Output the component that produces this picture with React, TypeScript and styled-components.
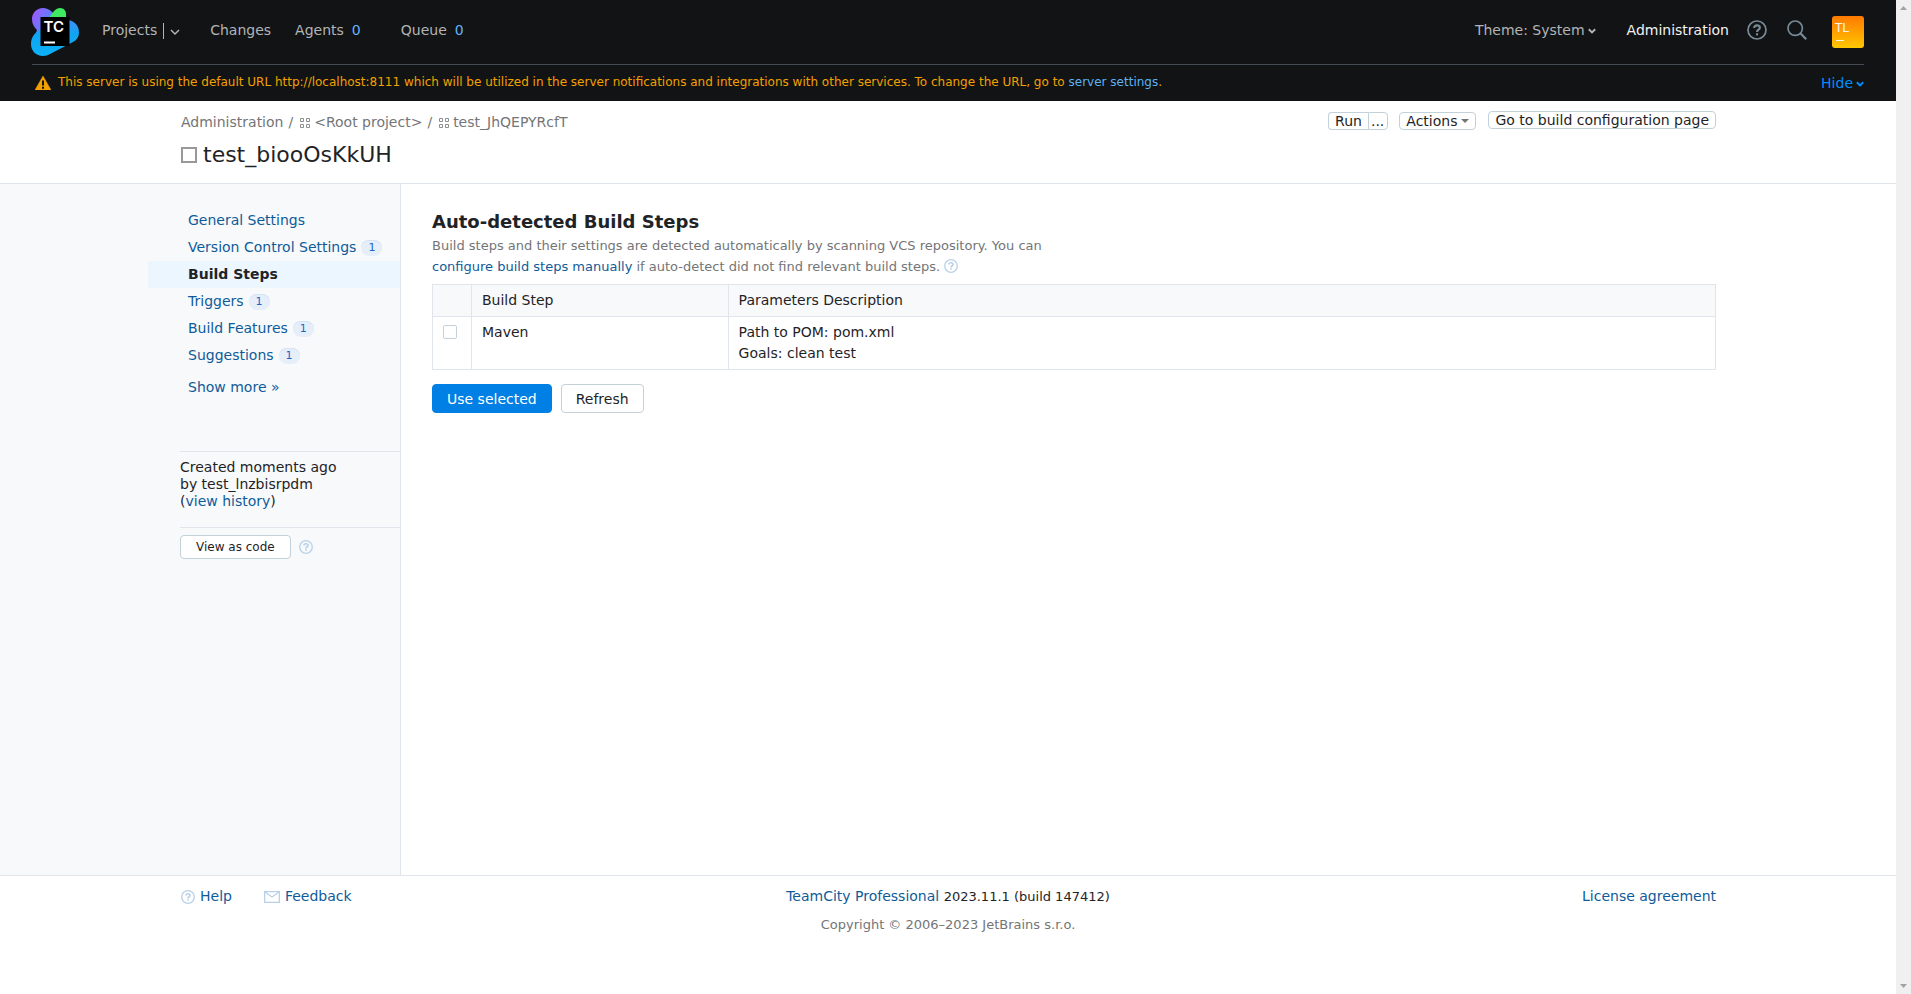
import React from "react";
import styled, { createGlobalStyle, css } from "styled-components";

const Global = createGlobalStyle`
  * { box-sizing: border-box; }
  body {
    margin: 0;
    background: #fff;
    color: #1f2326;
    font: 14px/21px "DejaVu Sans", sans-serif;
  }
  button { font: inherit; color: inherit; cursor: pointer; }
  a { color: #0f5b99; text-decoration: none; }
  svg { display: block; flex: none; }
`;

const Frame = styled.div`
  display: flex;
  min-height: 100vh;
`;

const Page = styled.div`
  flex: 1;
  min-width: 0;
  display: flex;
  flex-direction: column;
`;

const ScrollRail = styled.div`
  width: 15px;
  padding: 6px 4px;
  background: #f0f0f0;
  display: flex;
  flex-direction: column;
  justify-content: space-between;
`;

/* ---------- header ---------- */

const Header = styled.header`
  background: #121314;
  padding: 0 32px;
`;

const TopBar = styled.div`
  display: flex;
  align-items: center;
  justify-content: space-between;
  height: 65px;
  padding-bottom: 1px;
  border-bottom: 1px solid #434a54;
`;

const BarGroup = styled.div`
  display: flex;
  align-items: center;
`;

const LogoLink = styled.a`
  margin: 0 22px 0 -1px;
`;

const Nav = styled.nav`
  display: flex;
  align-items: center;
  padding-bottom: 2px;
`;

const NavLink = styled.a<{ $bright?: boolean }>`
  color: ${(p) => (p.$bright ? "#f2f2f2" : "#b2b4b6")};
`;

const NavItem = styled.div<{ $gap: number }>`
  display: flex;
  align-items: center;
  margin-right: ${(p) => p.$gap}px;
`;

const NavCount = styled.span`
  margin-left: 8px;
  color: #65b1ff;
`;

const NavDivider = styled.span`
  width: 1px;
  height: 16px;
  margin: 0 6px;
  background: #b2b4b6;
`;

const PlainButton = styled.button<{ $color?: string }>`
  display: flex;
  align-items: center;
  gap: 3px;
  padding: 0;
  border: 0;
  background: none;
  color: ${(p) => p.$color || "#b2b4b6"};
`;

const Tools = styled.div`
  display: flex;
  align-items: center;
  padding-bottom: 3px;
`;

const ToolGap = styled.div<{ $left: number }>`
  margin-left: ${(p) => p.$left}px;
`;

const Avatar = styled.button`
  display: flex;
  flex-direction: column;
  align-items: flex-start;
  width: 32px;
  height: 32px;
  margin-left: 25px;
  padding: 4px 3px;
  border: 0;
  border-radius: 3px;
  background: linear-gradient(#ff7a00, #ffc800);
  color: #fff8ec;
  font: 12px/16px "DejaVu Sans", sans-serif;

  &::after {
    content: "";
    width: 8px;
    height: 1px;
    margin: 4px 0 0 1px;
    background: #fff8ec;
  }
`;

const Banner = styled.div`
  display: flex;
  align-items: center;
  justify-content: space-between;
  height: 36px;
  padding-left: 3px;
`;

const Warning = styled.p`
  display: flex;
  align-items: center;
  gap: 7px;
  margin: 0;
  padding-bottom: 1px;
  color: #f2a100;
  font-size: 12px;
`;

const BannerLink = styled.a`
  color: #5eb2f2;
`;

/* ---------- title area ---------- */

const Container = styled.div`
  max-width: 1600px;
  margin: 0 auto;
  padding: 0 32px;
`;

const TitleArea = styled.section`
  border-bottom: 1px solid #dfe5eb;
`;

const TitleRow = styled(Container)`
  display: flex;
  align-items: flex-start;
  justify-content: space-between;
  min-height: 82px;
  padding-top: 10px;
`;

const Crumbs = styled.nav`
  display: flex;
  align-items: center;
  gap: 5px;
  padding: 1px 0 0 1px;
  color: #737577;
`;

const Crumb = styled.a`
  display: flex;
  align-items: center;
  gap: 4px;
  color: #737577;

  & + & { margin-left: 2px; }
`;

const Title = styled.h1`
  display: flex;
  align-items: center;
  gap: 6px;
  margin: 8px 0 0;
  padding-left: 1px;
  font-size: 22px;
  line-height: 28px;
  font-weight: 400;
`;

const ConfigMark = styled.span`
  width: 16px;
  height: 16px;
  border: 2px solid #999;
`;

const ActionBar = styled.div`
  display: flex;
  align-items: flex-start;
  gap: 12px;
`;

const SmallButton = styled.button`
  display: flex;
  align-items: center;
  gap: 4px;
  height: 18px;
  padding: 0 6px;
  border: 1px solid #c3d1db;
  border-radius: 4px;
  background: #fff;
  line-height: 16px;
`;

const Lowered = styled.div`
  display: flex;
  gap: 11px;
  padding-top: 1px;
`;

const SplitButton = styled.div`
  display: flex;

  ${SmallButton}:first-child {
    border-radius: 4px 0 0 4px;
    border-right: 0;
  }
  ${SmallButton}:last-child {
    border-radius: 0 4px 4px 0;
    padding: 0 3px 0 2px;
  }
`;

/* ---------- body ---------- */

const Body = styled.div`
  flex: 1;
  display: flex;
`;

const Sidebar = styled.aside`
  flex: none;
  width: calc(max(0px, (100% - 1600px) / 2) + 253px);
  padding: 23px 0 24px;
  border-right: 1px solid #dfe5eb;
  background: #f7f9fb;
  display: flex;
  flex-direction: column;
  align-items: flex-end;
`;

const Menu = styled.ul`
  width: 252px;
  margin: 0;
  padding: 0;
  list-style: none;
`;

const MenuItem = styled.li<{ $active?: boolean }>`
  height: 27px;
  padding-left: 40px;
  display: flex;
  align-items: center;
  gap: 5px;
  ${(p) =>
    p.$active &&
    css`
      background: #ebf6ff;
      a { color: #1f2326; font-weight: 700; }
    `}
`;

const Badge = styled.span`
  height: 16px;
  padding: 0 7px;
  border-radius: 8px;
  background: #e6eff9;
  box-shadow: inset 0 1px 0 #d3e3f5;
  color: #1a66c9;
  font-size: 11px;
  line-height: 16px;
`;

const ShowMore = styled.div`
  width: 252px;
  padding: 8px 0 0 40px;
`;

const SideBlock = styled.div`
  width: 220px;
  border-top: 1px solid #dfe5eb;
  padding: 7px 0 17px;
  line-height: 17px;
`;

const SideActions = styled.div`
  width: 220px;
  border-top: 1px solid #dfe5eb;
  padding-top: 7px;
  display: flex;
  align-items: center;
  gap: 8px;
`;

const HistoryGap = styled.div`
  height: 53px;
`;

const Button = styled.button<{ $primary?: boolean; $small?: boolean }>`
  height: ${(p) => (p.$small ? 24 : 29)}px;
  padding: 0 ${(p) => (p.$small ? 15 : 14)}px;
  border: 1px solid ${(p) => (p.$primary ? "#0080e5" : "#c3d1db")};
  border-radius: 4px;
  background: ${(p) => (p.$primary ? "#0080e5" : "#fff")};
  color: ${(p) => (p.$primary ? "#fff" : "#1f2326")};
  font-size: ${(p) => (p.$small ? 12 : 14)}px;
  line-height: 20px;
`;

const Main = styled.main`
  flex: 1;
  min-width: 0;
  max-width: 1348px;
  padding: 25px 33px 32px 31px;
`;

const Heading = styled.h2`
  margin: 0;
  font-size: 18px;
  line-height: 26px;
`;

const Intro = styled.div`
  margin: 0 0 7px;
  color: #737577;
  font-size: 13px;
  line-height: 21px;

  p { margin: 0; }
`;

const HintButton = styled.button`
  display: inline-flex;
  padding: 0;
  border: 0;
  background: none;
  vertical-align: -2px;
`;

const StepsTable = styled.table`
  width: 100%;
  border-collapse: collapse;
  table-layout: fixed;

  th, td {
    padding: 5px 10px;
    border: 1px solid #dfe5eb;
    font-weight: 400;
    text-align: left;
    vertical-align: top;
  }
  th { background: #f7f9fb; }
`;

const Check = styled.input`
  display: block;
  appearance: none;
  width: 14px;
  height: 14px;
  margin: 3px 0 0;
  border: 1px solid #c3d1db;
  border-radius: 2px;
  background: #fff;
  &:checked { background: #0080e5; }
`;

const ButtonRow = styled.div`
  display: flex;
  gap: 9px;
  margin-top: 14px;
`;

/* ---------- footer ---------- */

const Footer = styled.footer`
  border-top: 1px solid #dfe5eb;
  min-height: 119px;
  padding: 10px 0 32px;
`;

const FooterRow = styled(Container)`
  display: grid;
  grid-template-columns: 1fr auto 1fr;
`;

const FooterLinks = styled.div`
  display: flex;
  gap: 32px;
  padding-left: 1px;
`;

const IconLink = styled.a`
  display: flex;
  align-items: center;
  gap: 5px;
`;

const Version = styled.div`
  text-align: center;
  span { font-size: 13px; }
`;

const License = styled.div`
  text-align: right;
`;

const Copyright = styled.div`
  margin-top: 7px;
  text-align: center;
  color: #737577;
  font-size: 13px;
`;

/* ---------- drawings ---------- */

const Logo = () => (
  <svg width="49" height="48" viewBox="0 0 49 48" aria-label="TeamCity">
    <defs>
      <linearGradient id="tcPurple" x1="0" y1="0.3" x2="1" y2="0.7">
        <stop offset="0" stopColor="#9a5cff" />
        <stop offset="0.55" stopColor="#4d86fb" />
        <stop offset="1" stopColor="#10a8f5" />
      </linearGradient>
      <linearGradient id="tcBlue" x1="0" y1="0" x2="0" y2="1">
        <stop offset="0" stopColor="#3f8ff8" />
        <stop offset="0.4" stopColor="#0fa5f2" />
        <stop offset="1" stopColor="#0bb2f8" />
      </linearGradient>
    </defs>
    <path d="M12 0C5.500 0 1 5 1 11c0 5 2 8 5 11l-1 3 10 2 23-9L21 4C18 1 15 0 12 0z" fill="url(#tcPurple)" />
    <path d="M8 22C4 25 0 29 0 36c0 7 5 12 12 12 3 0 5-1 7-2l23-12c4-2 6-5.500 6-9.500C48 18 44 13 37 12L14 20z" fill="url(#tcBlue)" />
    <path d="M17 11l6-8c2-2 4-3 6-3 4 0 6 3 6 6v12H17z" fill="#3dea62" />
    <rect x="9.500" y="9" width="29" height="29" fill="#000" />
    <text x="12.500" y="24" fill="#fff" fontFamily="Inter, sans-serif" fontSize="15" fontWeight="600">TC</text>
    <rect x="13" y="33.500" width="11" height="2" fill="#fff" />
  </svg>
);

const Chevron = ({ size = 10, weight = 1.5 }: { size?: number; weight?: number }) => (
  <svg width={size} height={size} viewBox="0 0 10 10" fill="none" stroke="currentColor" strokeWidth={weight}>
    <path d="M1 4l4 4 4-4" />
  </svg>
);

const Question = ({ size = 14, color = "#b9d1e8", weight = 1.3 }: { size?: number; color?: string; weight?: number }) => (
  <svg width={size} height={size} viewBox="0 0 14 14" fill="none" stroke={color} strokeWidth={weight}>
    <circle cx="7" cy="7" r="6.3" />
    <path d="M5 5.6C5 4.4 5.8 3.8 7 3.8s2 .7 2 1.7C9 6.8 7 6.8 7 8.4" strokeWidth={weight * 1.25} />
    <path d="M7 9.3v1.5" strokeWidth={weight * 1.25} />
  </svg>
);

const Search = () => (
  <svg width="20" height="20" viewBox="0 0 20 20" fill="none" stroke="#788b98" strokeWidth="1.7">
    <circle cx="8.2" cy="8.2" r="7.2" />
    <path d="M13.2 13l6 6.2" strokeWidth="2.2" />
  </svg>
);

const WarningIcon = () => (
  <svg width="16" height="14" viewBox="0 0 16 14">
    <path d="M8 0l8 14H0z" fill="#f2a100" stroke="#f2a100" strokeWidth="0.5" strokeLinejoin="round" />
    <path d="M7 4.5h2v5H7zM7 10.7h2v2H7z" fill="#121314" />
  </svg>
);

const ProjectIcon = () => (
  <svg width="10" height="10" viewBox="0 0 10 10" fill="none" stroke="#8c8e90">
    <path d="M.5.5h3v3h-3zM6.5.5h3v3h-3zM.5 6.5h3v3h-3zM6.5 6.5h3v3h-3z" />
  </svg>
);

const Mail = () => (
  <svg width="16" height="12" viewBox="0 0 16 12" fill="none" stroke="#b9d1e8">
    <path d="M.5.5h15v11H.5z" strokeWidth="1.6" />
    <path d="M1 1l7 5 7-5" strokeWidth="1.3" />
  </svg>
);

const Triangle = ({ up, width, color }: { up?: boolean; width: number; color: string }) => (
  <svg width={width} height="4" viewBox="0 0 8 4" preserveAspectRatio="none">
    <path d={up ? "M4 0l4 4H0z" : "M0 0h8L4 4z"} fill={color} />
  </svg>
);

const menu = [
  { label: "General Settings" },
  { label: "Version Control Settings", count: 1 },
  { label: "Build Steps", active: true },
  { label: "Triggers", count: 1 },
  { label: "Build Features", count: 1 },
  { label: "Suggestions", count: 1 },
];

export default function App() {
  return (
    <Frame>
      <Global />
      <Page>
        <Header>
          <TopBar>
            <BarGroup>
              <LogoLink href="#"><Logo /></LogoLink>
              <Nav>
                <NavItem $gap={30}>
                  <NavLink href="#">Projects</NavLink>
                  <NavDivider />
                  <PlainButton aria-label="Show projects"><Chevron /></PlainButton>
                </NavItem>
                <NavItem $gap={24}><NavLink href="#">Changes</NavLink></NavItem>
                <NavItem $gap={40}>
                  <NavLink href="#">Agents</NavLink><NavCount>0</NavCount>
                </NavItem>
                <NavItem $gap={0}>
                  <NavLink href="#">Queue</NavLink><NavCount>0</NavCount>
                </NavItem>
              </Nav>
            </BarGroup>
            <BarGroup>
              <Tools>
                <PlainButton>Theme: System <Chevron size={8} weight={2.4} /></PlainButton>
                <ToolGap $left={31}><NavLink href="#" $bright>Administration</NavLink></ToolGap>
                <ToolGap $left={18}>
                  <PlainButton aria-label="Help"><Question size={20} color="#788b98" weight={1.2} /></PlainButton>
                </ToolGap>
                <ToolGap $left={20}>
                  <PlainButton aria-label="Search"><Search /></PlainButton>
                </ToolGap>
              </Tools>
              <Avatar>TL</Avatar>
            </BarGroup>
          </TopBar>
          <Banner>
            <Warning>
              <WarningIcon />
              <span>
                This server is using the default URL http://localhost:8111 which will be utilized in the server
                notifications and integrations with other services. To change the URL, go to{" "}
                <BannerLink href="#">server settings</BannerLink>.
              </span>
            </Warning>
            <PlainButton $color="#008eff">Hide <Chevron size={8} weight={2.4} /></PlainButton>
          </Banner>
        </Header>

        <TitleArea>
          <TitleRow>
            <div>
              <Crumbs aria-label="Breadcrumbs">
                <Crumb href="#">Administration</Crumb>/
                <Crumb href="#"><ProjectIcon />&lt;Root project&gt;</Crumb>/
                <Crumb href="#"><ProjectIcon />test_JhQEPYRcfT</Crumb>
              </Crumbs>
              <Title><ConfigMark />test_biooOsKkUH</Title>
            </div>
            <ActionBar>
              <Lowered>
                <SplitButton>
                  <SmallButton>Run</SmallButton>
                  <SmallButton aria-label="Run custom build">...</SmallButton>
                </SplitButton>
                <SmallButton>Actions <Triangle width={8} color="#737577" /></SmallButton>
              </Lowered>
              <SmallButton>Go to build configuration page</SmallButton>
            </ActionBar>
          </TitleRow>
        </TitleArea>

        <Body>
          <Sidebar>
            <Menu>
              {menu.map((m) => (
                <MenuItem key={m.label} $active={m.active}>
                  <a href="#">{m.label}</a>
                  {m.count && <Badge>{m.count}</Badge>}
                </MenuItem>
              ))}
            </Menu>
            <ShowMore><a href="#">Show more »</a></ShowMore>
            <HistoryGap />
            <SideBlock>
              Created moments ago<br />
              by test_lnzbisrpdm<br />
              (<a href="#">view history</a>)
            </SideBlock>
            <SideActions>
              <Button $small>View as code</Button>
              <HintButton aria-label="About settings as code"><Question /></HintButton>
            </SideActions>
          </Sidebar>
          <Main>
            <Heading>Auto-detected Build Steps</Heading>
            <Intro>
              <p>Build steps and their settings are detected automatically by scanning VCS repository. You can</p>
              <p>
                <a href="#">configure build steps manually</a> if auto-detect did not find relevant build steps.{" "}
                <HintButton aria-label="About build steps"><Question /></HintButton>
              </p>
            </Intro>
            <StepsTable>
              <colgroup>
                <col style={{ width: "39px" }} />
                <col style={{ width: "20%" }} />
                <col />
              </colgroup>
              <thead>
                <tr>
                  <th />
                  <th>Build Step</th>
                  <th>Parameters Description</th>
                </tr>
              </thead>
              <tbody>
                <tr>
                  <td><Check type="checkbox" aria-label="Select Maven" /></td>
                  <td>Maven</td>
                  <td>Path to POM: pom.xml<br />Goals: clean test</td>
                </tr>
              </tbody>
            </StepsTable>
            <ButtonRow>
              <Button $primary>Use selected</Button>
              <Button>Refresh</Button>
            </ButtonRow>
          </Main>
        </Body>

        <Footer>
          <FooterRow>
            <FooterLinks>
              <IconLink href="#"><Question />Help</IconLink>
              <IconLink href="#"><Mail />Feedback</IconLink>
            </FooterLinks>
            <Version><a href="#">TeamCity Professional</a> <span>2023.11.1 (build 147412)</span></Version>
            <License><a href="#">License agreement</a></License>
          </FooterRow>
          <Copyright>Copyright © 2006–2023 JetBrains s.r.o.</Copyright>
        </Footer>
      </Page>
      <ScrollRail aria-hidden="true">
        <Triangle up width={7} color="#a3a3a3" />
        <Triangle width={7} color="#a3a3a3" />
      </ScrollRail>
    </Frame>
  );
}
